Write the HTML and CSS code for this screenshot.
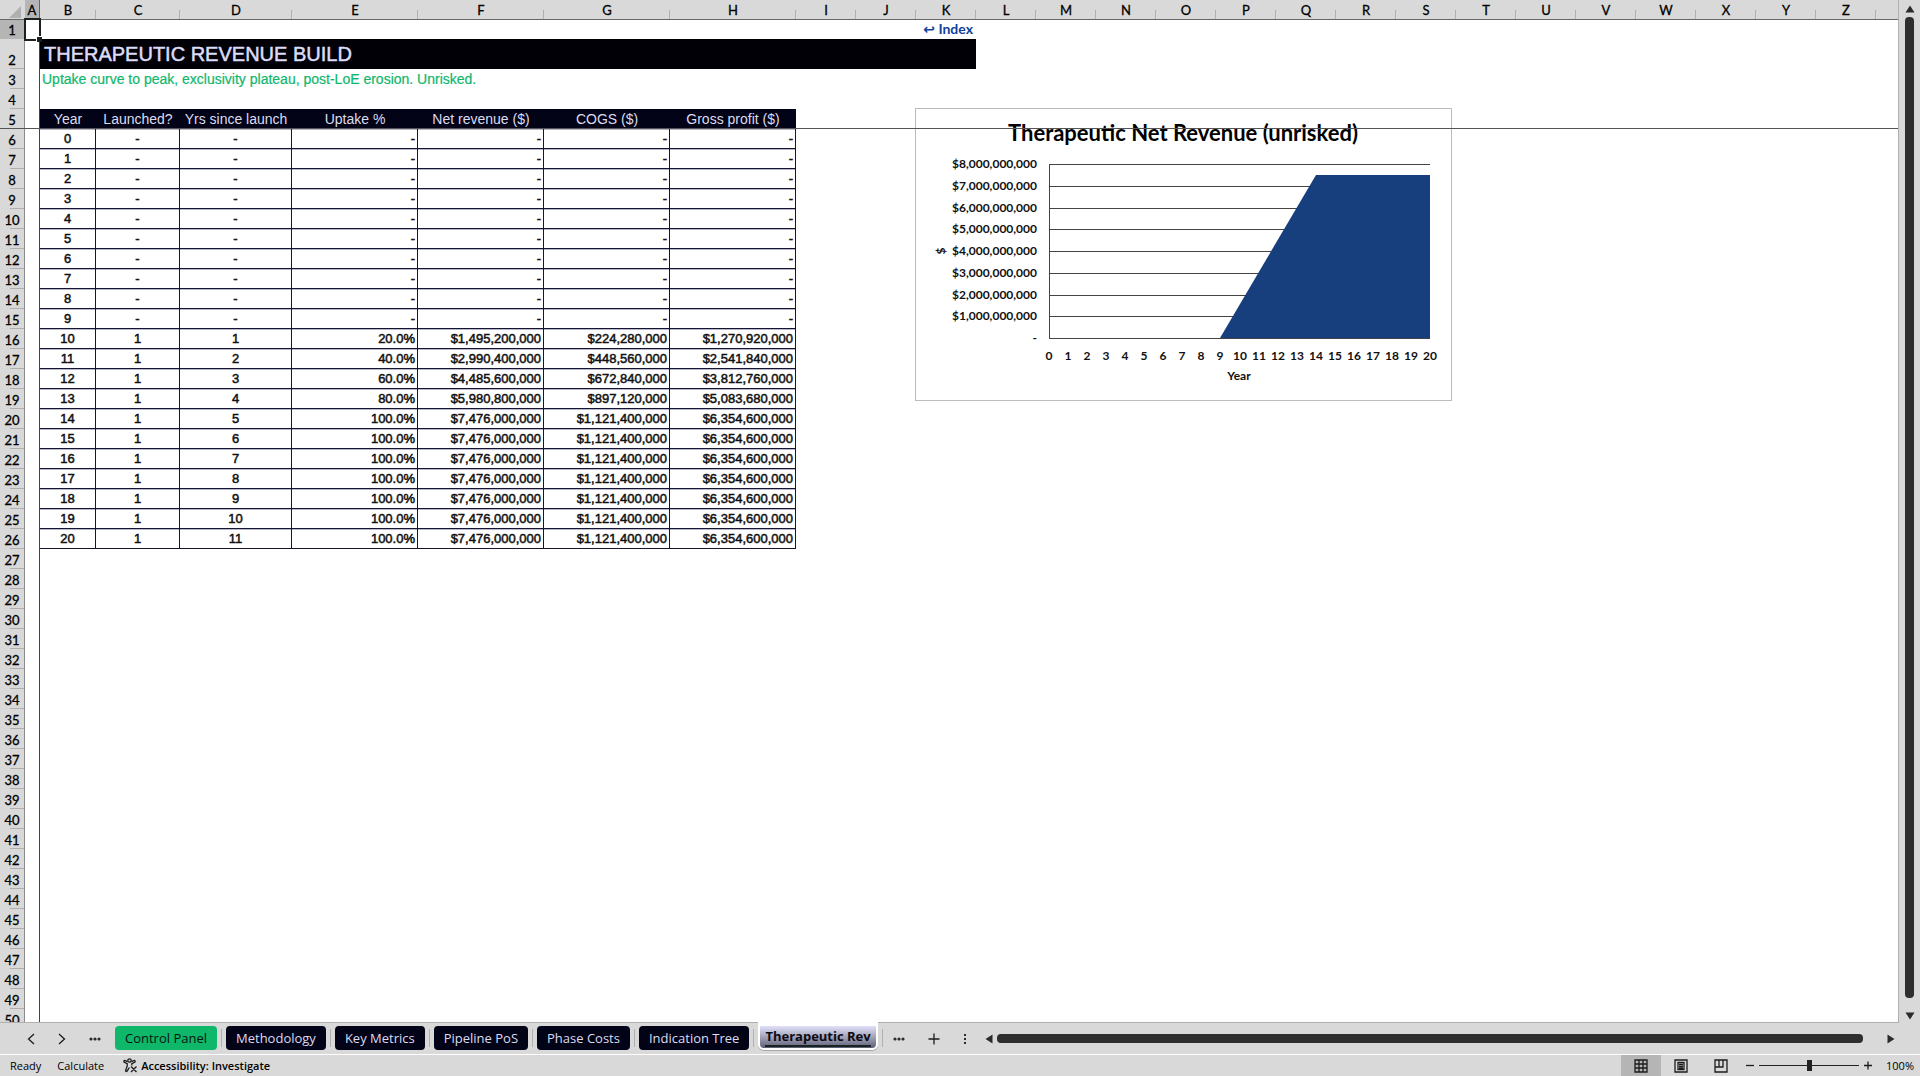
FILE: index.html
```html
<!DOCTYPE html>
<html lang="en">
<head>
<meta charset="utf-8">
<title>Therapeutic Revenue Build</title>
<link rel="stylesheet" href="styles.css">
</head>
<body>
<div class="app">
  <main class="workspace">
    <div class="canvas">
      <table class="sheet">
        <colgroup id="cols"></colgroup>
        <thead><tr id="letters"></tr></thead>
        <tbody id="rows"></tbody>
      </table>
      <div class="cursor"></div>
      <figure class="chart">
        <svg id="chart" viewBox="0 0 537 293" width="537" height="293" role="img" aria-label="Therapeutic Net Revenue (unrisked)"></svg>
      </figure>
      <div class="freeze-row"></div>
    </div>
    <div class="vscroll">
      <button class="arrow" aria-label="Scroll up"><svg width="10" height="8"><path d="M5 0.5L9.5 7.5H.5Z"/></svg></button>
      <div class="vthumb"></div>
      <button class="arrow" aria-label="Scroll down"><svg width="10" height="8"><path d="M.5 .5H9.500L5 7.500Z"/></svg></button>
    </div>
  </main>

  <nav class="tabbar" aria-label="Sheets">
    <div class="tabnav">
      <button class="icon" aria-label="Previous sheet"><svg width="8" height="12"><path d="M7 1L1.500 6L7 11" class="stroke"/></svg></button>
      <button class="icon" aria-label="Next sheet"><svg width="8" height="12"><path d="M1 1L6.500 6L1 11" class="stroke"/></svg></button>
      <button class="icon" aria-label="More sheets"><svg width="12" height="4"><circle cx="2" cy="2" r="1.600"/><circle cx="6" cy="2" r="1.600"/><circle cx="10" cy="2" r="1.600"/></svg></button>
    </div>
    <div class="tabs">
      <button class="tab green">Control Panel</button>
      <button class="tab">Methodology</button>
      <button class="tab">Key Metrics</button>
      <button class="tab">Pipeline PoS</button>
      <button class="tab">Phase Costs</button>
      <button class="tab">Indication Tree</button>
      <button class="tab active"><span>Therapeutic Rev</span></button>
    </div>
    <div class="tabtools">
      <button class="icon" aria-label="More sheets"><svg width="12" height="4"><circle cx="2" cy="2" r="1.600"/><circle cx="6" cy="2" r="1.600"/><circle cx="10" cy="2" r="1.600"/></svg></button>
      <button class="icon" aria-label="New sheet"><svg width="12" height="12"><path d="M6 .5V11.500M.5 6H11.500" class="stroke"/></svg></button>
      <button class="icon" aria-label="Options"><svg width="4" height="12"><path d="M1 1h2v2H1zM1 5h2v2H1zM1 9h2v2H1z"/></svg></button>
    </div>
    <div class="hscroll">
      <button class="arrow" aria-label="Scroll left"><svg width="8" height="10"><path d="M7.500 .5V9.500L.5 5Z"/></svg></button>
      <div class="hthumb"></div>
      <button class="arrow" aria-label="Scroll right"><svg width="8" height="10"><path d="M.5 .5V9.500L7.500 5Z"/></svg></button>
    </div>
  </nav>

  <footer class="status">
    <span class="ready">Ready</span>
    <button class="plain">Calculate</button>
    <button class="plain access">
      <svg width="15" height="15" viewBox="0 0 15 15"><circle cx="6.500" cy="2.500" r="1.700" class="stroke"/><path class="stroke" d="M4.500 3.600L1.800 2.500Q.6 2.600 1 4L4.200 5.700V8.200L2.500 12.500Q2.900 14 4 13.200L6.400 9.500M8.500 3.600L11.200 2.500Q12.500 2.700 12 4L8.800 5.700V7.500M8 8.500L13.500 14M13.500 8.500L8 14"/></svg>
      Accessibility: Investigate
    </button>
    <div class="views">
      <button class="view on" aria-label="Normal view"><svg width="14" height="14"><path class="stroke" d="M1 1H13V13H1ZM5 1V13M9 1V13M1 5H13M1 9H13"/></svg></button>
      <button class="view" aria-label="Page layout"><svg width="14" height="14"><path class="stroke" d="M1 1H13V13H1ZM4 3.500H10V10.500H4ZM5 5.500H9M5 7.300H9M5 9H9"/></svg></button>
      <button class="view" aria-label="Page break preview"><svg width="14" height="14"><path class="stroke" d="M1 1H13V13H1ZM1 8H9V1M5 1V8"/></svg></button>
    </div>
    <button class="icon" aria-label="Zoom out"><svg width="8" height="10"><path class="stroke" d="M0 4.500H8"/></svg></button>
    <input class="zoom" type="range" min="0" max="100" value="50" aria-label="Zoom">
    <button class="icon" aria-label="Zoom in"><svg width="8" height="10"><path class="stroke" d="M0 4.500H8M4 .5V8.500"/></svg></button>
    <button class="plain percent">100%</button>
  </footer>
</div>
<script src="app.js"></script>
</body>
</html>
```
FILE: styles.css
```css
* { box-sizing: border-box; }

body {
  margin: 0;
  font-family: "Liberation Sans", Arial, sans-serif;
  font-size: 13px;
  color: #111;
  background: #d9d9d9;
}

button {
  margin: 0;
  padding: 0;
  border: 0;
  background: none;
  color: inherit;
  font: inherit;
}

svg { display: block; fill: #2b2b2b; }
.stroke { fill: none; stroke: #1c1c1c; stroke-width: 1.3; }

.app { display: flex; flex-direction: column; height: 100vh; }

/* Worksheet area */
.workspace { display: flex; flex: 1; min-height: 0; }

.canvas {
  position: relative;
  flex: 1;
  min-width: 0;
  overflow: hidden;
  background: #fff;
  border-right: 1px solid #b0b0b0;
  border-bottom: 1px solid #b0b0b0;
}

.sheet {
  width: 100%;
  table-layout: fixed;
  border-collapse: separate;
  border-spacing: 0;
}
.sheet th, .sheet td { padding: 0; overflow: hidden; white-space: nowrap; }
.c-head { width: 25px; }
.c-a { width: 15px; }
.c-b { width: 56px; }
.c-c { width: 84px; }
.c-d { width: 112px; }
.c-wide { width: 126px; }
.c-std { width: 60px; }

.sheet .letter {
  height: 20px;
  padding-top: 2px;
  border-bottom: 1px solid #666;
  background: linear-gradient(#b0b0b0, #b0b0b0) right bottom / 1px 9px no-repeat #d9d9d9;
  font: 400 13px/17px Lato, sans-serif;
  color: #000;
  -webkit-text-stroke: 0.300px #000;
}
.sheet .corner, .sheet .letter.rest { background: #d9d9d9; }
.corner svg { margin: 2px 0 0 9px; fill: #b0b0b0; }
.sheet .letter.sel, .sheet .num.sel { background: #b5b5b5; }
.sheet .letter.sel { border-right: 1px solid #666; }

.sheet .num {
  height: 20px;
  border-right: 1px solid #8c8c8c;
  background: linear-gradient(#b0b0b0, #b0b0b0) right bottom / 14px 1px no-repeat #d9d9d9;
  font: 400 13px/18px Lato, sans-serif;
  color: #000;
  text-align: center;
  vertical-align: bottom;
  -webkit-text-stroke: 0.300px #000;
}
.sheet .first .num { height: 19px; line-height: 17px; }
.sheet .title-row .num { height: 30px; }
.sheet .a { border-right: 1px solid #444; }

.sheet .index { padding-right: 3px; text-align: right; vertical-align: top; font: 700 14px/18px Lato, "DejaVu Sans", sans-serif; }
.index a { color: #0f429c; text-decoration: none; }

.sheet .title { padding-left: 4px; background: #000006; color: #dcdcf8; font-size: 20px; line-height: 28px; text-align: left; font-weight: 400; -webkit-text-stroke: 0.500px #dcdcf8; }
.sheet .subtitle { padding-left: 2px; color: #0fb76b; font-size: 14px; line-height: 18px; -webkit-text-stroke: 0.200px #0fb76b; }

.sheet .field { background: #030317; color: #dcdcf0; font-size: 14px; line-height: 18px; font-weight: 400; text-align: center; }

.sheet .cell {
  border-right: 1px solid #15152f;
  border-bottom: 1px solid #15152f;
  box-shadow: inset 0 1px #b6b6cc;
  font-size: 13px;
  line-height: 18px;
  text-align: center;
  -webkit-text-stroke: 0.500px #111;
}
.sheet .cell.money { padding-right: 2px; text-align: right; }

/* Active cell outline with its fill handle */
.cursor { position: absolute; left: 24px; top: 18px; width: 17px; height: 23px; border: 2px solid #1b211c; }
.cursor::after { content: ""; position: absolute; right: -3px; bottom: -3px; width: 5px; height: 5px; background: #1b211c; border-left: 1px solid #fff; border-top: 1px solid #fff; }

.chart { position: absolute; left: 915px; top: 108px; margin: 0; background: #fff; }
.chart text { font-family: Lato, sans-serif; font-weight: 700; font-size: 12px; fill: #111; text-anchor: middle; }
.chart .heading { font-size: 22px; fill: #000; }
.chart .value { text-anchor: end; }
.chart .frame { fill: none; stroke: #bcbcbc; }
.chart .grid { stroke: #444; }
.chart .area { fill: #173e7d; }

.freeze-row { position: absolute; left: 0; right: 0; top: 128px; height: 1px; background: #555; }

/* Scroll bars */
.vscroll { display: flex; flex-direction: column; align-items: center; width: 21px; padding: 5px 0 3px; }
.vthumb { flex: 1; width: 9px; margin: 4px 0 14px; border-radius: 4px; background: #2e2e2e; }
.hscroll { display: flex; flex: 1; align-items: center; padding: 0 25px 0 0; }
.hthumb { flex: 1; height: 9px; margin: 0 24px 0 4px; border-radius: 4px; background: #2e2e2e; }

/* Sheet tabs */
.tabbar { display: flex; align-items: center; height: 32px; padding-left: 27px; border-bottom: 1px solid #fff; background: #d9d9d9; }
.tabnav { display: flex; align-items: center; gap: 23px; margin-right: 14px; }
.tabs { display: flex; align-items: flex-start; align-self: stretch; }
.tab {
  position: relative;
  height: 24px;
  margin: 3px 9px 0 0;
  padding: 0 10px;
  border-radius: 4px;
  background: #030317;
  color: #dcdcf0;
  font: 400 13px/24px "Open Sans", sans-serif;
  white-space: nowrap;
}
.tab::after { content: ""; position: absolute; right: -5px; top: 3px; width: 1px; height: 18px; background: #b0b0b0; }
.tab.green { background: #0fb76b; color: #06140c; }
.tab.active {
  height: 28px;
  margin: -1px 0 0;
  padding: 0 5px;
  border: 2px solid #fff;
  border-top-width: 4px;
  border-radius: 0 0 6px 6px;
  background: linear-gradient(#e0e0fa, #a3a3b8 50%, #5d5d78);
  color: #0b0b12;
  font-weight: 700;
  line-height: 18px;
  box-shadow: 0 1px #a8a8a8;
}
.tab.active::after { right: -7px; }
.tab.active span { display: block; height: 20px; border-bottom: 2px solid #16261f; }
.tabtools { display: flex; align-items: center; gap: 23px; margin: 0 18px 0 15px; }

/* Status bar */
.status { display: flex; align-items: center; height: 21px; padding: 0 6px 0 10px; background: #d9d9d9; font: 400 11px/20px "Open Sans", sans-serif; color: #000; white-space: nowrap; }
.ready { margin-right: 16px; }
.access { display: flex; align-items: center; gap: 3px; margin-left: 19px; font-weight: 600; }
.views { display: flex; align-self: stretch; margin: 0 5px 0 auto; }
.view { display: flex; align-items: center; justify-content: center; width: 40px; }
.view.on { background: #b5b5b5; }
.zoom { appearance: none; width: 100px; height: 12px; margin: 0 5px; background: linear-gradient(#222, #222) center / 100% 1px no-repeat; }
.zoom::-webkit-slider-thumb { appearance: none; width: 5px; height: 11px; background: #222; }
.percent { margin-left: 14px; }
```
FILE: app.js
```js
const letters = "ABCDEFGHIJKLMNOPQRSTUVWXYZ".split("");
const colClass = { A: "c-a", B: "c-b", C: "c-c", D: "c-d", E: "c-wide", F: "c-wide", G: "c-wide", H: "c-wide" };
const LAST_ROW = 50;
const FULL_REVENUE = 7476000000;
const COGS_RATE = 0.15;

document.getElementById("cols").innerHTML =
  '<col class="c-head">' + letters.map(l => `<col class="${colClass[l] || "c-std"}">`).join("") + "<col>";

document.getElementById("letters").innerHTML =
  '<th class="letter corner"><svg width="12" height="12"><path d="M12 0V12H0Z"/></svg></th>' +
  letters.map(l => `<th class="letter${l === "A" ? " sel" : ""}" scope="col">${l}</th>`).join("") +
  '<th class="letter rest"></th>';

const money = n => (n ? "$" + Math.round(n).toLocaleString("en-US") : "-");

function dataRow(year) {
  const since = Math.max(0, year - 9);
  const uptake = Math.min(1, since * 0.2);
  const revenue = FULL_REVENUE * uptake;
  const mid = [year, since ? 1 : "-", since || "-"];
  const right = [
    uptake ? (uptake * 100).toFixed(1) + "%" : "-",
    money(revenue),
    money(revenue * COGS_RATE),
    money(revenue * (1 - COGS_RATE))
  ];
  return mid.map(v => `<td class="cell">${v}</td>`).join("") +
    right.map(v => `<td class="cell money">${v}</td>`).join("") + '<td colspan="19"></td>';
}

function rowBody(n) {
  if (n === 1) return '<td colspan="9"></td><td class="index"><a href="#index">↩ Index</a></td><td colspan="16"></td>';
  if (n === 2) return '<th class="title" colspan="10">THERAPEUTIC REVENUE BUILD</th><td colspan="16"></td>';
  if (n === 3) return '<td class="subtitle" colspan="10">Uptake curve to peak, exclusivity plateau, post-LoE erosion. Unrisked.</td><td colspan="16"></td>';
  if (n === 5) {
    return ["Year", "Launched?", "Yrs since launch", "Uptake %", "Net revenue ($)", "COGS ($)", "Gross profit ($)"]
      .map(t => `<th class="field" scope="col">${t}</th>`).join("") + '<td colspan="19"></td>';
  }
  if (n >= 6 && n <= 26) return dataRow(n - 6);
  return '<td colspan="26"></td>';
}

const rowClass = { 1: "first", 2: "title-row" };
let html = "";
for (let n = 1; n <= LAST_ROW; n++) {
  html += `<tr class="${rowClass[n] || ""}"><th class="num${n === 1 ? " sel" : ""}" scope="row">${n}</th><td class="a"></td>${rowBody(n)}</tr>`;
}
document.getElementById("rows").innerHTML = html;

/* Area chart */
const L = 134, R = 515, T = 56, B = 230;
const px = year => Math.round(L + (R - L) * year / 20);
const py = billions => Math.round(B - (B - T) * billions / 8);
let s = '<rect class="frame" x="0.5" y="0.5" width="536" height="292"/>';
for (let v = 0; v <= 8; v++) {
  s += `<path class="grid" d="M${L} ${py(v) + 0.5}H${R}"/>`;
  s += `<text class="value" x="122" y="${py(v) + 4}">${v ? money(v * 1e9) : "-"}</text>`;
}
s += `<path class="area" d="M${px(9)} ${B}L${px(14)} ${py(7.476)}H${R}V${B}Z"/>`;
s += `<path class="grid" d="M${L + 0.5} ${T}V${B}"/>`;
for (let y = 0; y <= 20; y++) s += `<text x="${px(y)}" y="252">${y}</text>`;
s += '<text class="heading" x="268" y="33">Therapeutic Net Revenue (unrisked)</text>';
s += '<text x="324" y="272">Year</text>';
s += '<text transform="translate(30 143) rotate(-90)">$</text>';
document.getElementById("chart").innerHTML = s;
```
